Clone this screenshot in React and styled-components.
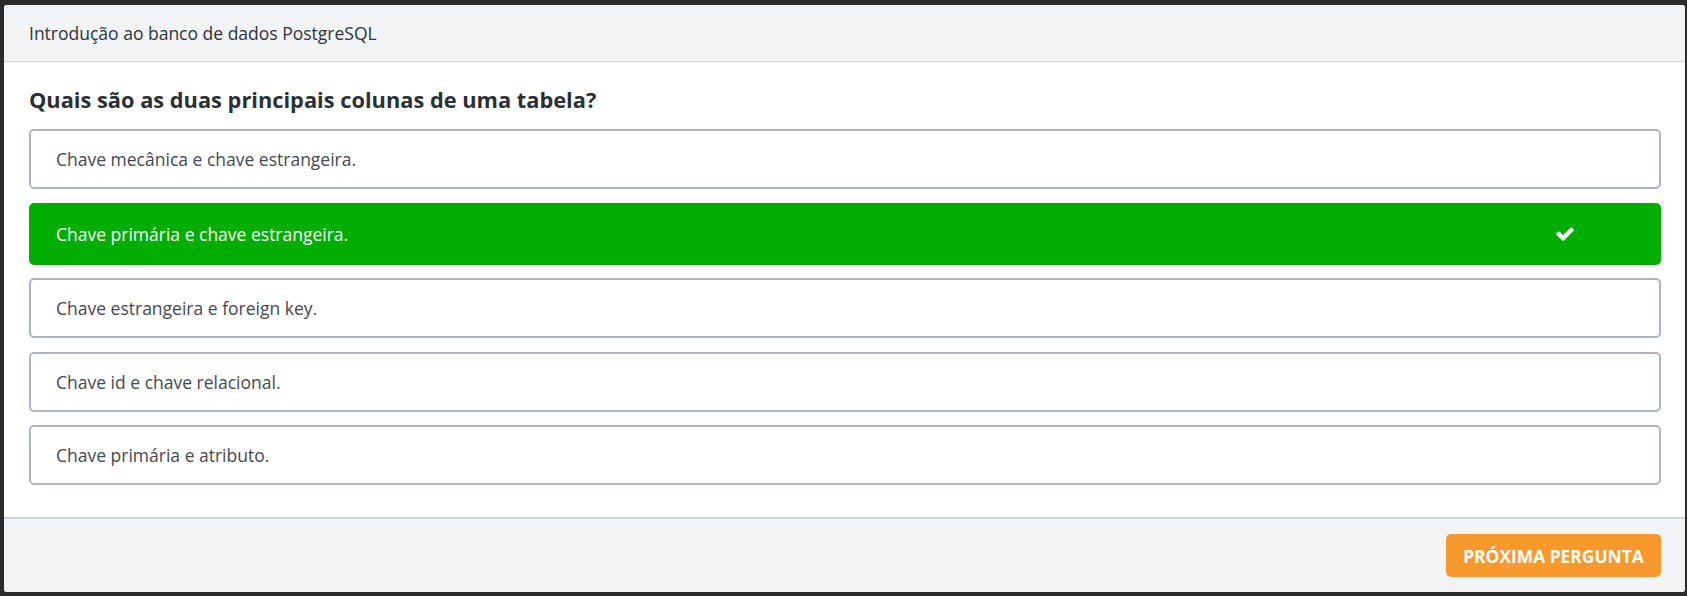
import React from "react";
import styled, { createGlobalStyle } from "styled-components";

const Global = createGlobalStyle`
  html, body { margin: 0; padding: 0; }
  body {
    background: #2b2b2b;
    padding: 5px 2px 4px 4px;
    font-family: "Open Sans", "Noto Sans", sans-serif;
  }
`;

const Card = styled.div`
  width: 1681px;
  height: 587px;
  background: #ffffff;
  border-radius: 3px;
  overflow: hidden;
  display: flex;
  flex-direction: column;
`;

const Header = styled.div`
  height: 56px;
  flex: none;
  display: flex;
  align-items: center;
  padding: 0 25px;
  background: #f2f3f5;
  border-bottom: 1px solid #cfd2d6;
  color: #2d3540;
  font-size: 17.5px;
`;

const Body = styled.div`
  flex: 1;
  padding: 23px 24px 0 25px;
  display: flex;
  flex-direction: column;
`;

const Question = styled.h2`
  margin: 0 0 14px;
  font-size: 21.8px;
  line-height: 30px;
  font-weight: 700;
  color: #2b3036;
`;

const Options = styled.div`
  display: flex;
  flex-direction: column;
  gap: 13.5px;
`;

const Option = styled.div`
  box-sizing: border-box;
  height: ${(p) => (p.$correct ? "62px" : "60px")};
  display: flex;
  align-items: center;
  justify-content: space-between;
  padding: 0 87px 0 25px;
  border-radius: 5px;
  font-size: 17.5px;
  border: ${(p) => (p.$correct ? "none" : "2px solid #adb5bd")};
  padding-left: ${(p) => (p.$correct ? "27px" : "25px")};
  background: ${(p) => (p.$correct ? "#00ae00" : "#ffffff")};
  color: ${(p) => (p.$correct ? "#ffffff" : "#45494e")};
`;

const Footer = styled.div`
  height: 73px;
  flex: none;
  display: flex;
  align-items: center;
  justify-content: flex-end;
  padding: 0 24px;
  background: #f2f3f5;
  border-top: 2px solid #cfd2d6;
`;

const NextButton = styled.button`
  height: 43px;
  width: 215px;
  padding: 0;
  border: none;
  border-radius: 5px;
  background: #f8992e;
  color: #ffffff;
  font-family: "Open Sans", "Noto Sans", sans-serif;
  font-weight: 700;
  font-size: 17.4px;
  text-transform: uppercase;
  cursor: pointer;
`;

const Check = () => (
  <svg width="18" height="14" viewBox="100 300 1580 1230" fill="#ffffff">
    <path d="M1671 566q0 40-28 68l-724 724-136 136q-28 28-68 28t-68-28l-136-136-362-362q-28-28-28-68t28-68l136-136q28-28 68-28t68 28l294 295 656-657q28-28 68-28t68 28l136 136q28 28 28 68z" />
  </svg>
);

const options = [
  { text: "Chave mecânica e chave estrangeira." },
  { text: "Chave primária e chave estrangeira.", correct: true },
  { text: "Chave estrangeira e foreign key." },
  { text: "Chave id e chave relacional." },
  { text: "Chave primária e atributo." },
];

export default function App() {
  return (
    <>
      <Global />
      <Card>
        <Header>Introdução ao banco de dados PostgreSQL</Header>
        <Body>
          <Question>Quais são as duas principais colunas de uma tabela?</Question>
          <Options>
            {options.map((o) => (
              <Option key={o.text} $correct={o.correct}>
                <span>{o.text}</span>
                {o.correct && <Check />}
              </Option>
            ))}
          </Options>
        </Body>
        <Footer>
          <NextButton>Próxima pergunta</NextButton>
        </Footer>
      </Card>
    </>
  );
}
